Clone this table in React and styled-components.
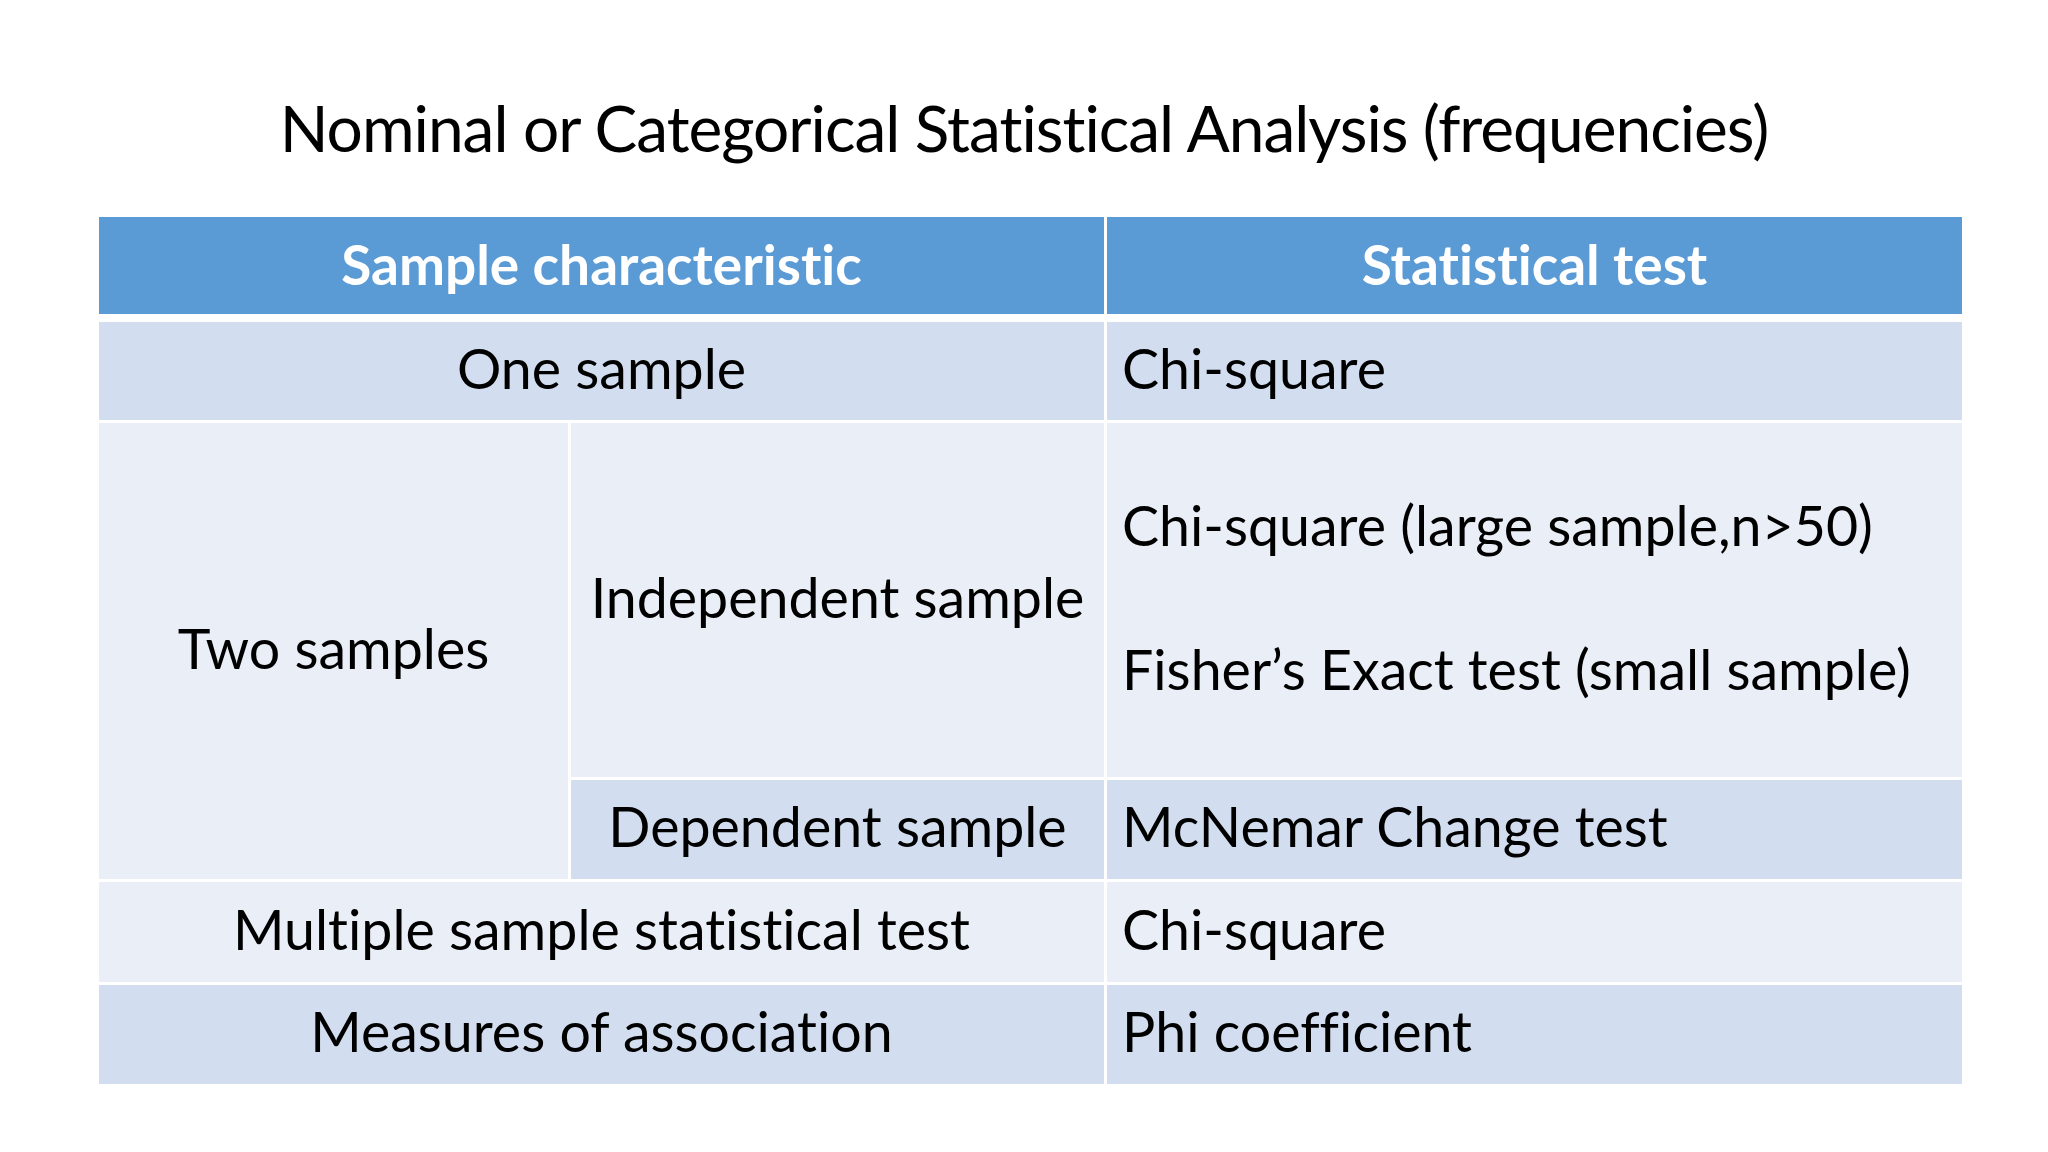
import React from "react";
import styled, { createGlobalStyle } from "styled-components";

const Global = createGlobalStyle`
  html, body { margin: 0; padding: 0; background: #ffffff; }
  body {
    font-family: Lato, "Open Sans", "Noto Sans", sans-serif;
    font-variant-ligatures: none;
    font-feature-settings: "liga" 0, "dlig" 0;
  }
`;

const Page = styled.div`
  width: 2048px;
  height: 1152px;
  box-sizing: border-box;
  padding: 85px 86px 0 99px;
  display: flex;
  flex-direction: column;
  align-items: stretch;
`;

const Title = styled.h1`
  margin: 0 -86px 46px -99px;
  text-align: center;
  font-family: Lato, sans-serif;
  font-weight: 400;
  font-size: 64px;
  line-height: 86px;
  color: #000;
  letter-spacing: -1px;
  white-space: nowrap;
`;

const Grid = styled.div`
  display: grid;
  grid-template-columns: 469px 533px 855px;
  grid-template-rows: 102px 98px 354px 99px 100px 99px;
  column-gap: 3px;
  row-gap: 3px;
  width: 1863px;
`;

const Head = styled.div`
  grid-column: ${(p) => p.$col};
  background: #5b9bd5;
  color: #ffffff;
  font-weight: 700;
  font-size: 55px;
  margin-bottom: 5px;
  padding-bottom: 4px;
  box-sizing: border-box;
  display: flex;
  align-items: center;
  justify-content: center;
  line-height: 1.2;
`;

const Cell = styled.div`
  grid-column: ${(p) => p.$col};
  grid-row: ${(p) => p.$row};
  background: ${(p) => (p.$dark ? "#d2deef" : "#eaeff7")};
  color: #000;
  font-size: 55.5px;
  line-height: 1.2;
  box-sizing: border-box;
  display: flex;
  align-items: center;
  justify-content: ${(p) => (p.$left ? "flex-start" : "center")};
  padding: 0 0 6px ${(p) => (p.$left ? "15px" : "0")};
  white-space: nowrap;
`;

const Stack = styled.div`
  display: flex;
  flex-direction: column;
  gap: 72px;
  line-height: 72px;
`;

export default function App() {
  return (
    <>
      <Global />
      <Page>
        <Title>Nominal or Categorical Statistical Analysis (frequencies)</Title>
        <Grid>
          <Head $col="1 / 3">Sample characteristic</Head>
          <Head $col="3">Statistical test</Head>

          <Cell $col="1 / 3" $row="2" $dark>One sample</Cell>
          <Cell $col="3" $row="2" $dark $left>Chi-square</Cell>

          <Cell $col="1" $row="3 / 5">Two samples</Cell>
          <Cell $col="2" $row="3">Independent sample</Cell>
          <Cell $col="3" $row="3" $left>
            <Stack>
              <span>Chi-square (large sample,n&gt;50)</span>
              <span>Fisher’s Exact test (small sample)</span>
            </Stack>
          </Cell>
          <Cell $col="2" $row="4" $dark>Dependent sample</Cell>
          <Cell $col="3" $row="4" $dark $left>McNemar Change test</Cell>

          <Cell $col="1 / 3" $row="5">Multiple sample statistical test</Cell>
          <Cell $col="3" $row="5" $left>Chi-square</Cell>

          <Cell $col="1 / 3" $row="6" $dark>Measures of association</Cell>
          <Cell $col="3" $row="6" $dark $left>Phi coefficient</Cell>
        </Grid>
      </Page>
    </>
  );
}
